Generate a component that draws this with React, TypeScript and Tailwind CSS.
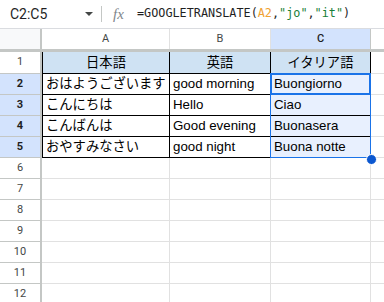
import React from "react";

const ROWS: [string, string, string][] = [
  ["日本語", "英語", "イタリア語"],
  ["おはようございます", "good morning", "Buongiorno"],
  ["こんにちは", "Hello", "Ciao"],
  ["こんばんは", "Good evening", "Buonasera"],
  ["おやすみなさい", "good night", "Buona notte"],
];

const CELL_FONT = "font-['Liberation_Sans','Noto_Sans_CJK_JP',Arial,sans-serif]";

function FormulaBar() {
  return (
    <div className="flex h-[29px] items-center border-b border-[#dadce0] bg-white">
      <div className="flex h-full w-[101px] items-center pl-[10px] pr-[8px]">
        <span className="font-['Roboto',Arial,sans-serif] text-[14px] text-[#1f1f1f]">C2:C5</span>
        <svg className="ml-auto" width="8" height="4" viewBox="0 0 8 4">
          <path d="M0 0 L8 0 L4 4 Z" fill="#444746" />
        </svg>
      </div>
      <div className="h-[16px] w-px bg-[#c4c7c5]" />
      <span className="ml-[11px] w-[24px] font-['Liberation_Serif',serif] text-[15px] italic text-[#80868b]">
        fx
      </span>
      <span className="font-['DejaVu_Sans_Mono',monospace] text-[11.8px] text-[#1f1f1f]">
        =GOOGLETRANSLATE(<span className="text-[#f0a232]">A2</span>,
        <span className="text-[#188038]">"jo"</span>,<span className="text-[#188038]">"it"</span>)
      </span>
    </div>
  );
}

function ColumnHeaders() {
  return (
    <div className="flex h-[23px] border-b-[3px] border-[#c4c7c5] font-['Roboto',Arial,sans-serif] text-[11px]">
      <div className="w-[42px] border-r-2 border-[#c4c7c5] bg-[#f8f9fa]" />
      <div className="flex w-[128px] items-center justify-center border-r border-[#e1e1e1] text-[#444746]">A</div>
      <div className="flex w-[101px] items-center justify-center border-r border-[#e1e1e1] text-[#444746]">B</div>
      <div className="flex w-[100px] items-center justify-center border-r border-[#c4c7c5] bg-[#d3e3fd] font-medium text-[#1f1f1f]">
        C
      </div>
      <div className="flex-1" />
    </div>
  );
}

function RowHeader({ n, selected }: { n: number; selected: boolean }) {
  return (
    <div
      className={
        selected
          ? "flex w-[42px] items-center justify-center border-b border-r-2 border-[#c4c7c5] bg-[#d3e3fd] font-['Roboto',Arial,sans-serif] text-[11px] font-bold text-[#1f1f1f]"
          : "flex w-[42px] items-center justify-center border-b border-r-2 border-[#c4c7c5] bg-white font-['Roboto',Arial,sans-serif] text-[11px] text-[#444746]"
      }
    >
      {n}
    </div>
  );
}

function DataRow({ index, cells }: { index: number; cells: [string, string, string] }) {
  const head = index === 0;
  const fill = head ? "bg-[#cfe2f3]" : "bg-white";
  const align = head ? "justify-center" : "justify-start pl-[3px]";
  return (
    <div className={head ? "flex h-[22px]" : "flex h-[21px]"}>
      <RowHeader n={index + 1} selected={!head} />
      <div className={`flex w-[128px] items-center overflow-hidden whitespace-nowrap border-b border-l border-r border-black ${fill} ${align} ${CELL_FONT} text-[13.3px] text-black`}>
        {cells[0]}
      </div>
      <div className={`flex w-[101px] items-center overflow-hidden whitespace-nowrap border-b border-r border-black ${fill} ${align} ${CELL_FONT} text-[13.3px] text-black`}>
        {cells[1]}
      </div>
      <div
        className={`flex w-[100px] items-center overflow-hidden whitespace-nowrap border-b border-r border-black ${
          head ? "bg-[#cfe2f3]" : "bg-[#e8f0fe]"
        } ${align} ${CELL_FONT} text-[13.3px] text-black`}
      >
        {cells[2]}
      </div>
      <div className="flex-1 border-b border-[#e1e1e1]" />
    </div>
  );
}

function EmptyRow({ n }: { n: number }) {
  return (
    <div className="flex h-[21px]">
      <RowHeader n={n} selected={false} />
      <div className="w-[128px] border-b border-r border-[#e1e1e1]" />
      <div className="w-[101px] border-b border-r border-[#e1e1e1]" />
      <div className="w-[100px] border-b border-r border-[#e1e1e1]" />
      <div className="flex-1 border-b border-[#e1e1e1]" />
    </div>
  );
}

export default function App() {
  return (
    <div className="relative h-[302px] w-[384px] overflow-hidden bg-white">
      <FormulaBar />
      <ColumnHeaders />
      {ROWS.map((r, i) => (
        <DataRow key={i} index={i} cells={r} />
      ))}
      {[6, 7, 8, 9, 10, 11, 12].map((n) => (
        <EmptyRow key={n} n={n} />
      ))}

      {/* selected range C2:C5 */}
      <div className="pointer-events-none absolute left-[270px] top-[73px] h-[85px] w-[101px] border border-[#1a73e8]" />
      {/* active cell C2 */}
      <div className="pointer-events-none absolute left-[270px] top-[73px] h-[22px] w-[101px] border-2 border-[#1a73e8]" />
      {/* fill handle */}
      <div className="absolute left-[366px] top-[154px] h-[11px] w-[11px] rounded-full border-[1.5px] border-white bg-[#0b57d0]" />
    </div>
  );
}
